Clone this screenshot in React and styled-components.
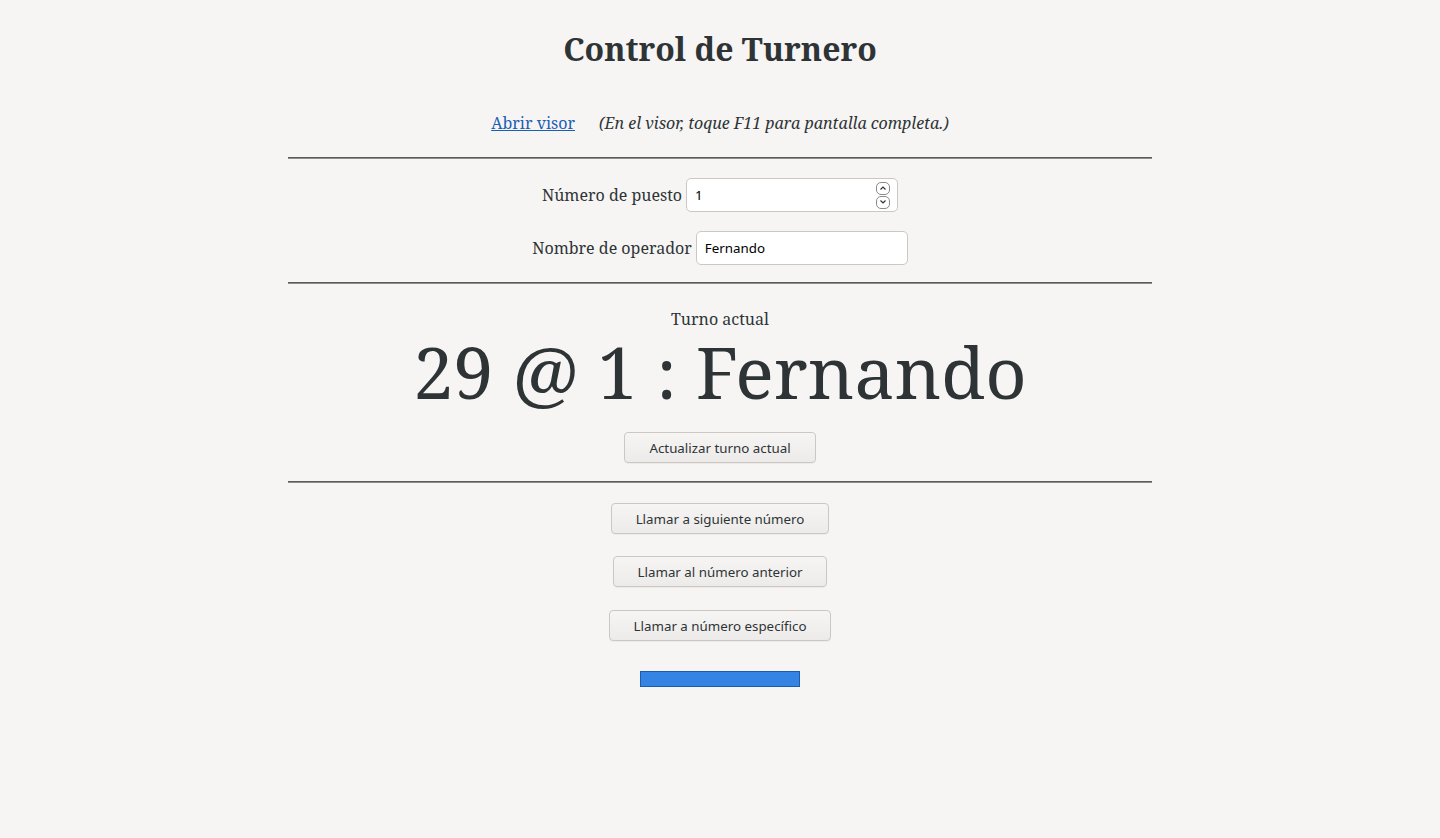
import React from "react";
import styled, { createGlobalStyle } from "styled-components";

const Global = createGlobalStyle`
  html, body {
    margin: 0;
    padding: 0;
    background: #f6f5f4;
    color: #2e3436;
    font-family: "Noto Serif", "DejaVu Serif", serif;
  }
`;

const Page = styled.div`
  width: 864px;
  margin: 0 auto;
  display: flex;
  flex-direction: column;
  align-items: center;
  padding-top: 26px;
`;

const Title = styled.h1`
  margin: 0;
  font-size: 32px;
  line-height: 46px;
  font-weight: 700;
`;

const LinkRow = styled.div`
  display: flex;
  gap: 24px;
  margin-top: 40px;
  font-size: 16px;
  line-height: 22px;
  a {
    color: #1a5fb4;
    text-decoration: underline;
  }
  em {
    font-style: italic;
  }
`;

const Rule = styled.hr`
  width: 100%;
  margin: ${(p) => p.$top || 0}px 0 0;
  border: 0;
  border-top: 1px solid #5b5b5b;
  border-bottom: 1px solid #8d8d8d;
`;

const Field = styled.label`
  display: flex;
  align-items: center;
  gap: 4px;
  margin-top: ${(p) => p.$top}px;
  font-size: 16px;
`;

const Box = styled.div`
  width: 212px;
  height: 34px;
  box-sizing: border-box;
  background: #fff;
  border: 1px solid #cdc7c2;
  border-radius: 5px;
  display: flex;
  align-items: center;
  padding: 0 8px;
`;

const Input = styled.input`
  flex: 1;
  min-width: 0;
  border: 0;
  outline: none;
  background: transparent;
  padding: 0;
  font-family: "Noto Sans", sans-serif;
  font-size: 13.33px;
  color: #000;
`;

const Spinner = styled.div`
  display: flex;
  flex-direction: column;
  gap: 1px;
  margin-right: -1px;
`;

const Spin = styled.span`
  width: 12px;
  height: 11px;
  border: 1px solid #8d8a86;
  border-radius: 5px;
  display: flex;
  align-items: center;
  justify-content: center;
  svg {
    display: block;
  }
`;

const Caption = styled.div`
  margin-top: 24px;
  font-size: 16px;
  line-height: 22px;
`;

const Big = styled.div`
  font-size: 72px;
  line-height: 72px;
  margin-top: 5px;
  white-space: nowrap;
`;

const Button = styled.button`
  margin-top: ${(p) => p.$top}px;
  width: ${(p) => p.$w}px;
  height: 31px;
  box-sizing: border-box;
  border: 1px solid #cdc7c2;
  border-radius: 4px;
  background: linear-gradient(#f6f5f4, #edebe9);
  box-shadow: 0 1px 0 rgba(0, 0, 0, 0.04);
  font-family: "Noto Sans", sans-serif;
  font-size: 13.33px;
  color: #2e3436;
  padding: 0;
  cursor: pointer;
`;

const Bar = styled.div`
  margin-top: 30px;
  width: 160px;
  height: 16px;
  box-sizing: border-box;
  background: #3584e4;
  border: 1px solid #1c5bb0;
`;

function Chevron({ up }) {
  return (
    <svg width="8" height="6" viewBox="0 0 8 6">
      <path
        d={up ? "M1.5 4.5 L4 2 L6.5 4.5" : "M1.5 1.5 L4 4 L6.5 1.5"}
        fill="none"
        stroke="#2e3436"
        strokeWidth="1.2"
      />
    </svg>
  );
}

export default function App() {
  return (
    <Page>
      <Global />
      <Title>Control de Turnero</Title>
      <LinkRow>
        <a href="#visor">Abrir visor</a>
        <em>(En el visor, toque F11 para pantalla completa.)</em>
      </LinkRow>
      <Rule $top={23} />
      <Field $top={19}>
        Número de puesto
        <Box>
          <Input defaultValue="1" />
          <Spinner>
            <Spin>
              <Chevron up />
            </Spin>
            <Spin>
              <Chevron />
            </Spin>
          </Spinner>
        </Box>
      </Field>
      <Field $top={19}>
        Nombre de operador
        <Box>
          <Input defaultValue="Fernando" />
        </Box>
      </Field>
      <Rule $top={17} />
      <Caption>Turno actual</Caption>
      <Big>29 @ 1 : Fernando</Big>
      <Button $top={25} $w={192}>
        Actualizar turno actual
      </Button>
      <Rule $top={18} />
      <Button $top={20} $w={218}>
        Llamar a siguiente número
      </Button>
      <Button $top={22} $w={214}>
        Llamar al número anterior
      </Button>
      <Button $top={23} $w={222}>
        Llamar a número específico
      </Button>
      <Bar />
    </Page>
  );
}
